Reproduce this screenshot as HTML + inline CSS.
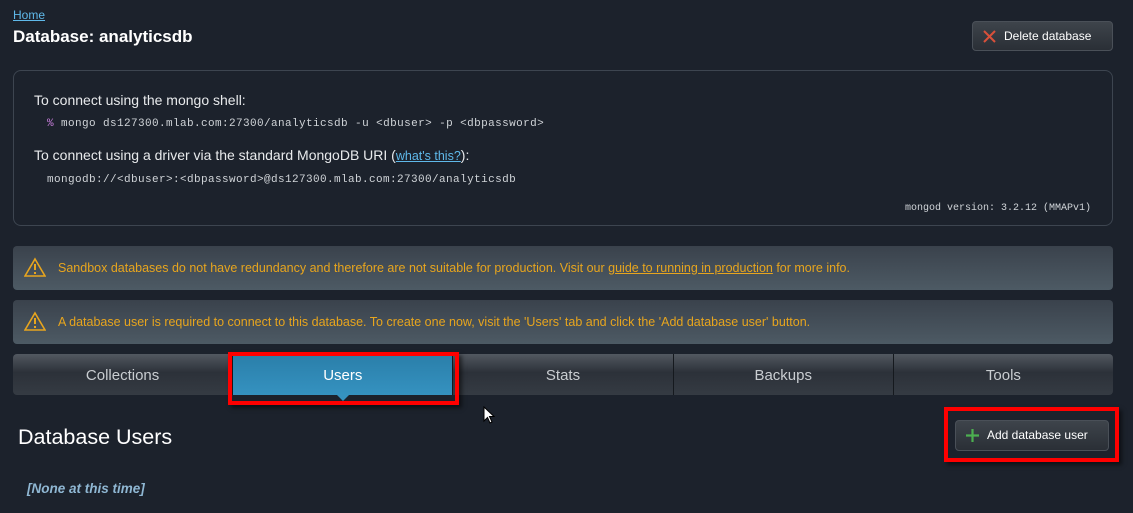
<!DOCTYPE html>
<html><head><meta charset="utf-8"><style>
*{margin:0;padding:0;box-sizing:border-box}
body{width:1133px;height:513px;background:#1c222c;font-family:"Liberation Sans",sans-serif;color:#fff;position:relative;overflow:hidden}
.abs{position:absolute}
a{color:#5fb9ea;text-decoration:underline}
.mono{font-family:"Liberation Mono",monospace;font-size:11px;letter-spacing:.4px;color:#d0d4d8}
.warn{position:absolute;left:13px;width:1100px;height:44px;border-radius:4px;background:linear-gradient(#3a424c,#4d5a64);color:#e7a51e;font-size:12.5px;line-height:44px;padding-left:45px}
.warn svg{position:absolute;left:11px;top:11px}
.tabs{position:absolute;left:13px;top:354px;width:1100px;height:41px;border-radius:4px;background:linear-gradient(#525860,#2c3139 45%,#353b43);display:flex}
.tab{flex:1;text-align:center;line-height:43px;font-size:15px;color:#c9cdd1;border-right:1px solid #15191e}
.tab:last-child{border:none}
.btn{position:absolute;border-radius:4px;background:linear-gradient(#3e444b,#2a2f36);border:1px solid #4a5058;font-size:12px;color:#fff}
</style></head><body>
<a class="abs" style="left:13px;top:8px;font-size:12px" href="#">Home</a>
<div class="abs" style="left:13px;top:27px;font-size:17px;font-weight:bold">Database: analyticsdb</div>
<div class="btn" style="left:972px;top:21px;width:141px;height:30px;line-height:28px;padding-left:31px">
<svg class="abs" style="left:10px;top:8px" width="13" height="13"><path d="M1 1L12 12M12 1L1 12" stroke="#d9503a" stroke-width="2"/></svg>Delete database</div>
<div class="abs" style="left:13px;top:70px;width:1100px;height:156px;border:1px solid #3d4550;border-radius:8px"></div>
<div class="abs" style="left:34px;top:92px;font-size:14px;color:#e8eaec">To connect using the mongo shell:</div>
<div class="abs mono" style="left:47px;top:118px"><span style="color:#c47cd8">%</span> mongo ds127300.mlab.com:27300/analyticsdb -u &lt;dbuser&gt; -p &lt;dbpassword&gt;</div>
<div class="abs" style="left:34px;top:147px;font-size:14px;color:#e8eaec">To connect using a driver via the standard MongoDB URI (<a href="#" style="font-size:12.5px">what's this?</a>):</div>
<div class="abs mono" style="left:47px;top:174px">mongodb://&lt;dbuser&gt;:&lt;dbpassword&gt;@ds127300.mlab.com:27300/analyticsdb</div>
<div class="abs mono" style="left:905px;top:203px;font-size:10px;letter-spacing:0">mongod version: 3.2.12 (MMAPv1)</div>
<div class="warn" style="top:246px"><svg width="22" height="20"><path d="M11 2L21 19H1Z" fill="none" stroke="#e7a51e" stroke-width="1.6"/><path d="M11 7V13M11 15V17" stroke="#e7a51e" stroke-width="2"/></svg>Sandbox databases do not have redundancy and therefore are not suitable for production. Visit our <a href="#" style="color:#e7a51e">guide to running in production</a> for more info.</div>
<div class="warn" style="top:300px"><svg width="22" height="20"><path d="M11 2L21 19H1Z" fill="none" stroke="#e7a51e" stroke-width="1.6"/><path d="M11 7V13M11 15V17" stroke="#e7a51e" stroke-width="2"/></svg>A database user is required to connect to this database. To create one now, visit the 'Users' tab and click the 'Add database user' button.</div>
<div class="tabs">
<div class="tab">Collections</div>
<div class="tab" style="background:linear-gradient(#2a7ea9,#3592c0);color:#fff;position:relative">Users<div class="abs" style="left:104px;bottom:-6px;width:0;height:0;border-left:6px solid transparent;border-right:6px solid transparent;border-top:6px solid #3592c0"></div></div>
<div class="tab">Stats</div>
<div class="tab">Backups</div>
<div class="tab">Tools</div>
</div>
<div class="abs" style="left:228px;top:352px;width:231px;height:53px;border:4px solid #f00;box-shadow:3px 3px 4px rgba(0,0,0,.5)"></div>
<svg class="abs" style="left:483px;top:406px" width="12" height="18"><path d="M1 1V15L4.5 11.5L7 17L9 16L6.5 10.5H11Z" fill="#fff" stroke="#000" stroke-width="1"/></svg>
<div class="abs" style="left:18px;top:425px;font-size:21.5px">Database Users</div>
<div class="btn" style="left:955px;top:420px;width:154px;height:31px;line-height:29px;padding-left:31px">
<svg class="abs" style="left:10px;top:8px" width="13" height="13"><path d="M6.5 0V13M0 6.5H13" stroke="#4caf50" stroke-width="2.2"/></svg>Add database user</div>
<div class="abs" style="left:944px;top:407px;width:175px;height:55px;border:4px solid #f00;box-shadow:3px 3px 4px rgba(0,0,0,.5)"></div>
<div class="abs" style="left:27px;top:481px;font-size:13.5px;font-style:italic;font-weight:bold;color:#8fb7d3">[None at this time]</div>
</body></html>
